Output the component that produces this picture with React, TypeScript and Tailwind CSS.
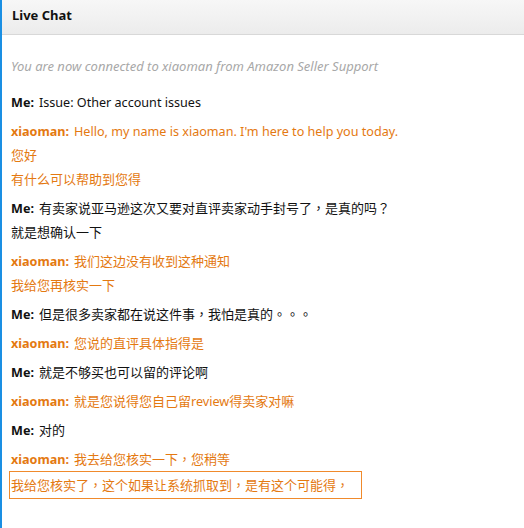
import React from "react";

type Msg = { who: "me" | "agent"; lines: string[] };

const msgs: Msg[] = [
  { who: "me", lines: ["Issue: Other account issues"] },
  { who: "agent", lines: ["Hello, my name is xiaoman. I'm here to help you today.", "您好", "有什么可以帮助到您得"] },
  { who: "me", lines: ["有卖家说亚马逊这次又要对直评卖家动手封号了，是真的吗？", "就是想确认一下"] },
  { who: "agent", lines: ["我们这边没有收到这种通知", "我给您再核实一下"] },
  { who: "me", lines: ["但是很多卖家都在说这件事，我怕是真的。。。"] },
  { who: "agent", lines: ["您说的直评具体指得是"] },
  { who: "me", lines: ["就是不够买也可以留的评论啊"] },
  { who: "agent", lines: ["就是您说得您自己留review得卖家对嘛"] },
  { who: "me", lines: ["对的"] },
  { who: "agent", lines: ["我去给您核实一下，您稍等"] },
];

function T({ s }: { s: string }) {
  const parts = s.split(/([，？。]+|[\x00-\x7F]+)/).filter((p) => p !== "");
  return (
    <>
      {parts.map((p, i) => {
        if (/^[，？。]+$/.test(p))
          return (
            <span
              key={i}
              lang="zh-Hant-TW"
              style={{ fontFamily: '"Noto Sans CJK TC", "Noto Sans CJK SC", sans-serif' }}
            >
              {p}
            </span>
          );
        if (/^[\x00-\x7F]+$/.test(p))
          return (
            <span key={i} className="text-[12.6px]">
              {p}
            </span>
          );
        return <React.Fragment key={i}>{p}</React.Fragment>;
      })}
    </>
  );
}

export default function App() {
  return (
    <div
      className="w-[524px] h-[528px] bg-white overflow-hidden text-[13px] [text-spacing-trim:space-all]"
      style={{ fontFamily: '"Noto Sans", "Noto Sans CJK SC", sans-serif' }}
    >
      <div className="h-full border-l-2 border-[#1a8fe3]">
        <div className="h-[35px] bg-gradient-to-b from-[#f7f7f7] to-[#ececec] border-b border-[#d8d8d8] pl-[10px] pt-[5px]">
          <span className="font-bold text-[#111] text-[13px] leading-[20px]">Live Chat</span>
        </div>
        <div className="pl-[9px] pt-[19px]">
          <div className="italic text-[#a8a8a8] h-[24px] leading-[24px]">You are now connected to xiaoman from Amazon Seller Support</div>
          <div className="mt-[12px] flex flex-col gap-[5px]">
            {msgs.map((m, i) => (
              <div key={i} className={m.who === "me" ? "text-[#111]" : "text-[#e47911]"}>
                {m.lines.map((l, j) => (
                  <div key={j} className="h-[24px] leading-[24px] whitespace-nowrap">
                    {j === 0 && (
                      <span className={"font-bold text-[12.6px] mr-[5px] " + (m.who === "me" ? "text-[#111]" : "text-[#e47911]")}>
                        {m.who === "me" ? "Me:" : "xiaoman:"}
                      </span>
                    )}
                    <T s={l} />
                  </div>
                ))}
                {i === msgs.length - 1 && (
                  <div className="-ml-[2px] w-[353px] h-[28px] border border-[#f08a2c] pl-[1px] pt-[1px]">
                    <div className="h-[24px] leading-[24px] whitespace-nowrap">
                      <T s="我给您核实了，这个如果让系统抓取到，是有这个可能得，" />
                    </div>
                  </div>
                )}
              </div>
            ))}
          </div>
        </div>
      </div>
    </div>
  );
}
